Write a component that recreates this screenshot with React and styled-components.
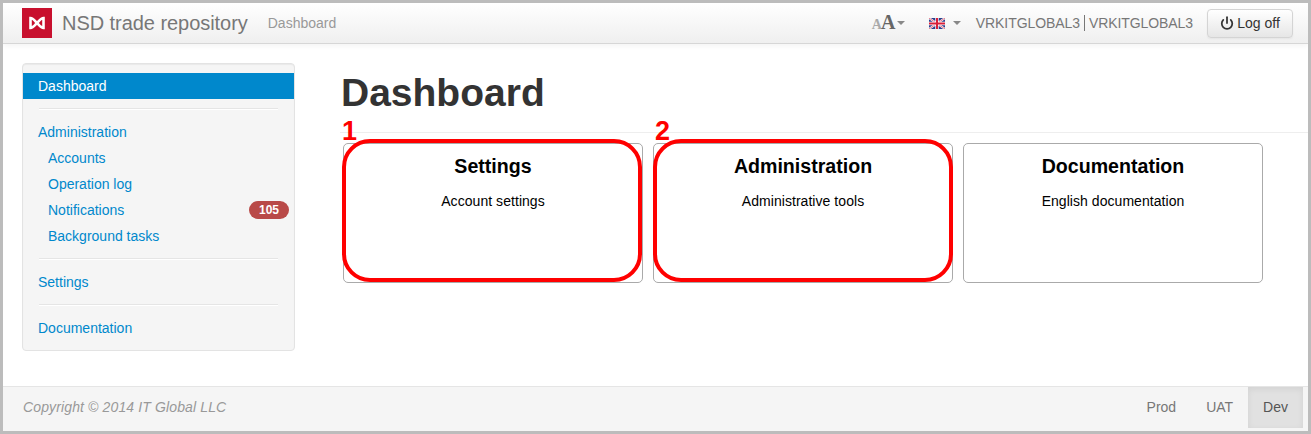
import React from "react"
import styled, { createGlobalStyle } from "styled-components"
import { Power } from "lucide-react"

const GlobalStyle = createGlobalStyle`
  html, body {
    margin: 0;
    padding: 0;
    background: #fff;
  }
  * {
    box-sizing: border-box;
  }
`

const Frame = styled.div`
  display: flex;
  flex-direction: column;
  width: 1311px;
  height: 434px;
  border: 3px solid #bcbcbc;
  background: #fff;
  font-family: "Liberation Sans", Arial, sans-serif;
  font-size: 14px;
  line-height: 20px;
  color: #333;
  overflow: hidden;
`

const Navbar = styled.header`
  display: flex;
  align-items: center;
  flex: none;
  height: 41px;
  padding: 0 15px 0 19px;
  background: linear-gradient(to bottom, #fff 0%, #efefef 100%);
  border-bottom: 1px solid #d6d6d6;
  box-shadow: 0 2px 6px rgba(0, 0, 0, 0.05);
`

const Logo = styled.svg`
  display: block;
  flex: none;
  width: 30px;
  height: 30px;
  margin-right: 10px;
`

const Brand = styled.span`
  font-size: 20px;
  letter-spacing: -0.05px;
  color: #777;
  margin-right: 20px;
`

const Crumb = styled.span`
  color: #999;
`

const NavRight = styled.div`
  display: flex;
  align-items: center;
  margin-left: auto;
`

const FontSwitch = styled.span`
  display: flex;
  align-items: baseline;
  width: 24px;
  font-family: "Liberation Serif", serif;
  font-weight: 700;
  color: #666;
  font-size: 20px;
  letter-spacing: -1px;

  small {
    font-size: 14px;
    color: #aaa;
  }
`

const Caret = styled.span`
  display: block;
  width: 0;
  height: 0;
  margin-left: ${props => props.gap}px;
  margin-right: ${props => props.after}px;
  border-top: 4px solid #888;
  border-left: 4px solid transparent;
  border-right: 4px solid transparent;
`

const Flag = styled.svg`
  display: block;
  width: 16px;
  height: 11px;
`

const UserName = styled.span`
  letter-spacing: -0.08px;
  color: #777;
`

const UserSep = styled.span`
  display: block;
  width: 1px;
  height: 16px;
  margin: 0 4px;
  background: #777;
`

const LogOff = styled.button`
  display: flex;
  align-items: center;
  justify-content: center;
  gap: 3px;
  width: 86px;
  height: 29px;
  margin-left: 14px;
  padding: 0;
  background: linear-gradient(to bottom, #fff 0%, #e6e6e6 100%);
  border: 1px solid #d4d4d4;
  border-radius: 4px;
  box-shadow: 0 1px 2px rgba(0, 0, 0, 0.05);
  font: inherit;
  color: #333;
`

const Body = styled.div`
  display: flex;
  flex: 1;
  min-height: 0;
`

const Sidebar = styled.nav`
  flex: none;
  align-self: flex-start;
  width: 273px;
  margin: 19px 45px 0 19px;
  padding: 9px 0;
  background: #f5f5f5;
  border: 1px solid #e3e3e3;
  border-radius: 4px;
  box-shadow: inset 0 1px 1px rgba(0, 0, 0, 0.05);
`

const NavItem = styled.a`
  display: flex;
  align-items: center;
  justify-content: space-between;
  height: 26px;
  padding: 3px 5px 3px ${props => (props.$sub ? 25 : 15)}px;
  color: ${props => (props.$active ? "#fff" : "#0088cc")};
  background: ${props => (props.$active ? "#0088cc" : "transparent")};
`

const Divider = styled.div`
  height: 2px;
  margin: 9px 16px;
  background: #e5e5e5;
  border-bottom: 1px solid #fff;
`

const Badge = styled.span`
  display: block;
  height: 18px;
  padding: 0 10px;
  background: #b94a48;
  border-radius: 9px;
  color: #fff;
  font-size: 12px;
  font-weight: 700;
  line-height: 18px;
`

const Main = styled.main`
  flex: 1;
  min-width: 0;
`

const PageHeader = styled.div`
  height: 89px;
  margin-bottom: 10px;
  padding: 27px 0 0 1px;
  border-bottom: 1px solid #eee;
`

const Title = styled.h1`
  margin: 0;
  font-size: 39px;
  font-weight: 700;
  line-height: 43px;
  color: #333;
`

const Cards = styled.div`
  display: flex;
  gap: 10px;
  padding-left: 3px;
`

const Card = styled.div`
  position: relative;
  width: 300px;
  height: 140px;
  padding-top: 10px;
  border: 1px solid #aaa;
  border-radius: 5px;
  text-align: center;
  color: #000;
`

const CardTitle = styled.div`
  margin-bottom: 13px;
  font-size: 19.6px;
  font-weight: 700;
  line-height: 24px;
`

const CardText = styled.div`
  letter-spacing: 0.05px;
  line-height: 20px;
`

const Highlight = styled.span`
  position: absolute;
  top: -5px;
  left: ${props => props.left}px;
  width: 300px;
  height: 143px;
  border: 4px solid #f00;
  border-radius: 28px;
`

const Marker = styled.span`
  position: absolute;
  top: -28px;
  left: ${props => props.left}px;
  font-size: 27px;
  font-weight: 700;
  line-height: 31px;
  color: #f00;
`

const Footer = styled.footer`
  display: flex;
  align-items: stretch;
  justify-content: space-between;
  flex: none;
  height: 45px;
  padding: 0 5px 3px 20px;
  background: #f5f5f5;
  border-top: 1px solid #e5e5e5;
`

const Copyright = styled.span`
  align-self: center;
  margin-bottom: 2px;
  letter-spacing: 0.13px;
  font-style: italic;
  color: #999;
`

const EnvList = styled.div`
  display: flex;
`

const EnvLink = styled.a`
  display: flex;
  align-items: center;
  padding: 0 15px 2px;
  color: ${props => (props.$active ? "#555" : "#777")};
  background: ${props => (props.$active ? "#e1e1e1" : "transparent")};
  box-shadow: ${props =>
    props.$active ? "inset 0 2px 6px rgba(0, 0, 0, 0.07)" : "none"};
`

const cards = [
  { title: "Settings", text: "Account settings", mark: "1", left: -2, ring: -2 },
  { title: "Administration", text: "Administrative tools", mark: "2", left: 1, ring: -1 },
  { title: "Documentation", text: "English documentation" },
]

const App = () => (
  <Frame>
    <GlobalStyle />
    <Navbar>
      <Logo viewBox="0 0 30 30">
        <rect width="30" height="30" fill="#c8102e" />
        <path
          d="M8.5 10 C11 10 13 13 15 15 C17 13 19 10 21.5 10 V20 C19 20 17 17 15 15 C13 17 11 20 8.5 20 Z"
          fill="none"
          stroke="#fff"
          strokeWidth="2.6"
        />
      </Logo>
      <Brand>NSD trade repository</Brand>
      <Crumb>Dashboard</Crumb>
      <NavRight>
        <FontSwitch>
          <small>A</small>A
        </FontSwitch>
        <Caret gap={1} after={24} />
        <Flag viewBox="0 0 16 11">
          <rect width="16" height="11" fill="#2b3f8c" />
          <path d="M0 0 L16 11 M16 0 L0 11" stroke="#fff" strokeWidth="2" />
          <path d="M0 0 L16 11 M16 0 L0 11" stroke="#d8324a" strokeWidth="0.7" />
          <path d="M8 0 V11 M0 5.5 H16" stroke="#fff" strokeWidth="3.4" />
          <path d="M8 0 V11 M0 5.5 H16" stroke="#d8203a" strokeWidth="2" />
        </Flag>
        <Caret gap={8} after={15} />
        <UserName>VRKITGLOBAL3</UserName>
        <UserSep />
        <UserName>VRKITGLOBAL3</UserName>
        <LogOff>
          <Power size={14} strokeWidth={3} />
          Log off
        </LogOff>
      </NavRight>
    </Navbar>
    <Body>
      <Sidebar>
        <NavItem $active>Dashboard</NavItem>
        <Divider />
        <NavItem>Administration</NavItem>
        <NavItem $sub>Accounts</NavItem>
        <NavItem $sub>Operation log</NavItem>
        <NavItem $sub>
          Notifications
          <Badge>105</Badge>
        </NavItem>
        <NavItem $sub>Background tasks</NavItem>
        <Divider />
        <NavItem>Settings</NavItem>
        <Divider />
        <NavItem>Documentation</NavItem>
      </Sidebar>
      <Main>
        <PageHeader>
          <Title>Dashboard</Title>
        </PageHeader>
        <Cards>
          {cards.map(card => (
            <Card key={card.title}>
              <CardTitle>{card.title}</CardTitle>
              <CardText>{card.text}</CardText>
              {card.mark && (
                <>
                  <Highlight left={card.ring} />
                  <Marker left={card.left}>{card.mark}</Marker>
                </>
              )}
            </Card>
          ))}
        </Cards>
      </Main>
    </Body>
    <Footer>
      <Copyright>Copyright © 2014 IT Global LLC</Copyright>
      <EnvList>
        <EnvLink>Prod</EnvLink>
        <EnvLink>UAT</EnvLink>
        <EnvLink $active>Dev</EnvLink>
      </EnvList>
    </Footer>
  </Frame>
)

export default App
